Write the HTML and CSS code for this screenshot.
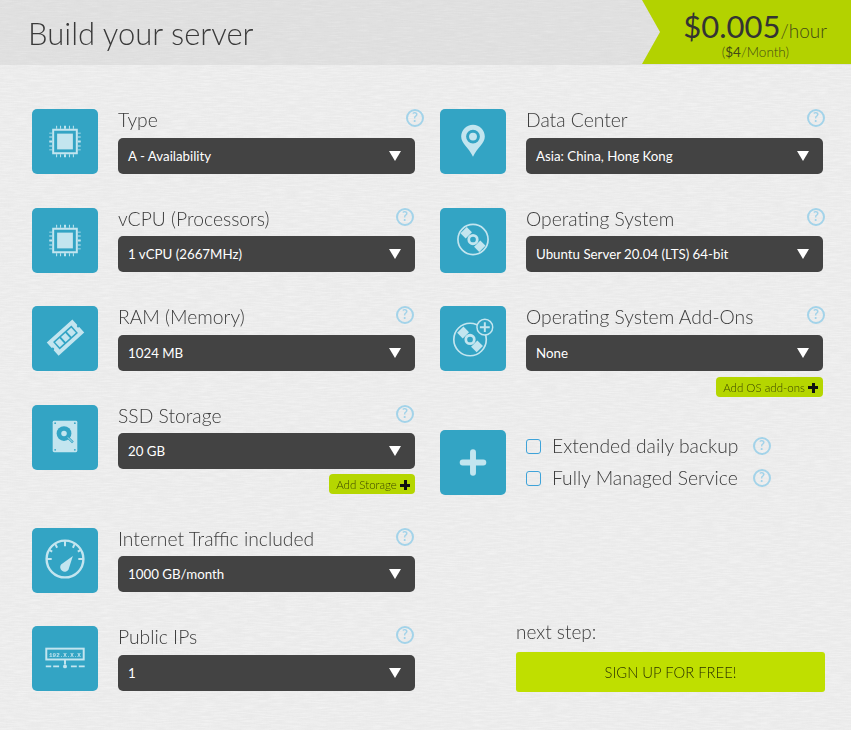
FILE: index.html
```html
<!DOCTYPE html>
<html lang="en">
<head>
<meta charset="utf-8">
<title>Build your server</title>
<link rel="stylesheet" href="styles.css">
</head>
<body>
<svg class="linen" aria-hidden="true">
  <defs>
    <filter id="weave-h" x="0" y="0" width="100%" height="100%">
      <feTurbulence type="fractalNoise" baseFrequency="0.07 0.8" numOctaves="2" seed="3"/>
      <feColorMatrix values="0 0 0 0 1  0 0 0 0 1  0 0 0 0 1  0.700 0 0 0 -0.250"/>
    </filter>
    <filter id="weave-v" x="0" y="0" width="100%" height="100%">
      <feTurbulence type="fractalNoise" baseFrequency="0.8 0.07" numOctaves="2" seed="8"/>
      <feColorMatrix values="0 0 0 0 0.800  0 0 0 0 0.800  0 0 0 0 0.800  0.700 0 0 0 -0.250"/>
    </filter>
  </defs>
  <rect width="100%" height="100%" filter="url(#weave-v)"/>
  <rect width="100%" height="100%" filter="url(#weave-h)"/>
</svg>
<svg class="defs" width="0" height="0" aria-hidden="true">
  <defs>
    <symbol id="i-chip" viewBox="0 0 66 66">
      <g fill="#c3e5ef">
        <path fill-rule="evenodd" d="M20 20h26v26H20zM22 22v22h22V22z"/>
        <rect x="25" y="25" width="16" height="16"/>
        <path d="M24 17h1v3h-1zM28 17h1v3h-1zM32 17h2v3h-2zM37 17h1v3h-1zM41 17h1v3h-1zM24 46h1v3h-1zM28 46h1v3h-1zM32 46h2v3h-2zM37 46h1v3h-1zM41 46h1v3h-1zM17 24h3v1h-3zM17 28h3v1h-3zM17 32h3v2h-3zM17 37h3v1h-3zM17 41h3v1h-3zM46 24h3v1h-3zM46 28h3v1h-3zM46 32h3v2h-3zM46 37h3v1h-3zM46 41h3v1h-3z"/>
      </g>
    </symbol>
    <symbol id="i-ram" viewBox="0 0 66 66">
      <g transform="rotate(-42 33.500 32)">
        <path fill="#c3e5ef" d="M16 23h35v7.500a1.500 1.500 0 0 0 0 3V41H16v-7.500a1.500 1.500 0 0 0 0-3z"/>
        <rect x="21" y="27" width="25" height="10" fill="#33a4c4"/>
        <path fill="#c3e5ef" d="M22.500 28.500h6v7h-6zM30.500 28.500h6v7h-6zM38.500 28.500h6v7h-6z"/>
      </g>
    </symbol>
    <symbol id="i-disk" viewBox="0 0 66 66">
      <rect x="20.500" y="16" width="25" height="32" rx="1.500" fill="#c3e5ef"/>
      <circle cx="32" cy="29" r="7.500" fill="#33a4c4"/>
      <path stroke="#33a4c4" stroke-width="2.500" d="M32 29l9 9"/>
      <circle cx="32" cy="29" r="2.800" fill="#c3e5ef"/>
      <path stroke="#c3e5ef" stroke-width="1" d="M36 33l4.500 4.500"/>
      <g fill="#33a4c4"><circle cx="23" cy="18.500" r=".9"/><circle cx="43" cy="18.500" r=".9"/><circle cx="23" cy="45.500" r=".9"/><circle cx="43" cy="45.500" r=".9"/></g>
    </symbol>
    <symbol id="i-gauge" viewBox="0 0 66 66">
      <g fill="none" stroke="#c3e5ef">
        <circle cx="33" cy="31.500" r="18.700" stroke-width="2.400"/>
        <path stroke-width="2" d="M33 13v5.500M23 16l2 4M43 16l-2 4M16.500 22l3.500 2M49.500 22l-3.500 2M14.500 31.500h5M46.500 31.500h5"/>
      </g>
      <path fill="#c3e5ef" d="M41 28.500L36.500 42.500a4.500 4.500 0 1 1-7.500-5.500z"/>
    </symbol>
    <symbol id="i-ip" viewBox="0 0 66 66">
      <rect x="14" y="23" width="38" height="11" fill="none" stroke="#c3e5ef" stroke-width="2"/>
      <text x="33" y="31" class="ip-text">192.X.X.X</text>
      <path fill="#c3e5ef" d="M32 34h2v5h-2zM13.500 40h5.500v2h-5.500zM21 40h6v2h-6zM39 40h6v2h-6zM47 40h6v2h-6z"/>
      <circle cx="33" cy="41" r="2" fill="#c3e5ef"/>
    </symbol>
    <symbol id="i-pin" viewBox="0 0 66 66">
      <path fill="#c3e5ef" fill-rule="evenodd" d="M33 16c6.600 0 12 5.300 12 12 0 7-7.500 11-12 20.500C28.500 39 21 35 21 28c0-6.700 5.400-12 12-12zM33 21a7 7 0 1 0 0 14 7 7 0 0 0 0-14z"/>
      <circle cx="33" cy="28" r="4" fill="#c3e5ef"/>
    </symbol>
    <symbol id="i-cd" viewBox="0 0 66 66">
      <circle cx="33" cy="32" r="15.300" fill="none" stroke="#c3e5ef" stroke-width="1.700"/>
      <circle cx="33" cy="32" r="4.300" fill="none" stroke="#c3e5ef" stroke-width="2.800"/>
      <g transform="rotate(-45 33 32)" fill="#c3e5ef">
        <rect x="28.500" y="18.500" width="9" height="7.500"/>
        <rect x="28.500" y="38" width="9" height="7.500"/>
      </g>
    </symbol>
    <symbol id="i-cdplus" viewBox="0 0 66 66">
      <circle cx="30" cy="34" r="16.500" fill="none" stroke="#c3e5ef" stroke-width="1.700"/>
      <circle cx="30" cy="34" r="4.300" fill="none" stroke="#c3e5ef" stroke-width="2.800"/>
      <g transform="rotate(-45 30 34)" fill="#c3e5ef">
        <rect x="25.500" y="20" width="9" height="8"/>
        <rect x="25.500" y="40" width="9" height="8"/>
      </g>
      <circle cx="45" cy="21.500" r="8" fill="#33a4c4" stroke="#c3e5ef" stroke-width="1.500"/>
      <path fill="#c3e5ef" d="M44 16.500h2v4h4v2h-4v4h-2v-4h-4v-2h4z"/>
    </symbol>
    <symbol id="i-plus" viewBox="0 0 66 66">
      <path stroke="#c3e5ef" stroke-width="6" stroke-linecap="round" d="M33 22.500v21M22.500 33h21"/>
    </symbol>
    <symbol id="i-help" viewBox="0 0 18 18">
      <circle cx="9" cy="9" r="8" fill="none" stroke="#a3d3e9" stroke-width="2"/>
      <text x="9" y="13.300" class="help-text">?</text>
    </symbol>
  </defs>
</svg>

<header class="topbar">
  <h1 class="title">Build your server</h1>
  <div class="price">
    <div class="price-main"><span class="price-value">$0.005</span>/hour</div>
    <div class="price-sub">(<b>$4</b>/Month)</div>
  </div>
</header>

<main class="builder">
  <section class="column">
    <div class="field">
      <div class="tile"><svg><use href="#i-chip"/></svg></div>
      <div class="control">
        <div class="label-row label-row-wide"><span class="label">Type</span><svg class="help"><use href="#i-help"/></svg></div>
        <div class="select">A - Availability</div>
      </div>
    </div>
    <div class="field">
      <div class="tile"><svg><use href="#i-chip"/></svg></div>
      <div class="control">
        <div class="label-row"><span class="label">vCPU (Processors)</span><svg class="help"><use href="#i-help"/></svg></div>
        <div class="select">1 vCPU (2667MHz)</div>
      </div>
    </div>
    <div class="field">
      <div class="tile"><svg><use href="#i-ram"/></svg></div>
      <div class="control">
        <div class="label-row"><span class="label">RAM (Memory)</span><svg class="help"><use href="#i-help"/></svg></div>
        <div class="select">1024 MB</div>
      </div>
    </div>
    <div class="field">
      <div class="tile"><svg><use href="#i-disk"/></svg></div>
      <div class="control">
        <div class="label-row"><span class="label">SSD Storage</span><svg class="help"><use href="#i-help"/></svg></div>
        <div class="select">20 GB</div>
        <a class="add">Add Storage <span class="add-plus"></span></a>
      </div>
    </div>
    <div class="field">
      <div class="tile"><svg><use href="#i-gauge"/></svg></div>
      <div class="control">
        <div class="label-row"><span class="label">Internet Traffic included</span><svg class="help"><use href="#i-help"/></svg></div>
        <div class="select">1000 GB/month</div>
      </div>
    </div>
    <div class="field">
      <div class="tile"><svg><use href="#i-ip"/></svg></div>
      <div class="control">
        <div class="label-row"><span class="label">Public IPs</span><svg class="help"><use href="#i-help"/></svg></div>
        <div class="select">1</div>
      </div>
    </div>
  </section>

  <section class="column">
    <div class="field">
      <div class="tile"><svg><use href="#i-pin"/></svg></div>
      <div class="control">
        <div class="label-row label-row-right"><span class="label">Data Center</span><svg class="help"><use href="#i-help"/></svg></div>
        <div class="select">Asia: China, Hong Kong</div>
      </div>
    </div>
    <div class="field">
      <div class="tile"><svg><use href="#i-cd"/></svg></div>
      <div class="control">
        <div class="label-row label-row-right"><span class="label">Operating System</span><svg class="help"><use href="#i-help"/></svg></div>
        <div class="select">Ubuntu Server 20.04 (LTS) 64-bit</div>
      </div>
    </div>
    <div class="field">
      <div class="tile"><svg><use href="#i-cdplus"/></svg></div>
      <div class="control">
        <div class="label-row label-row-right"><span class="label">Operating System Add-Ons</span><svg class="help"><use href="#i-help"/></svg></div>
        <div class="select">None</div>
        <a class="add add-low">Add OS add-ons <span class="add-plus"></span></a>
      </div>
    </div>
    <div class="field">
      <div class="tile"><svg><use href="#i-plus"/></svg></div>
      <div class="options">
        <label class="option"><span class="check"></span><span class="option-text">Extended daily backup</span><svg class="help"><use href="#i-help"/></svg></label>
        <label class="option"><span class="check"></span><span class="option-text">Fully Managed Service</span><svg class="help"><use href="#i-help"/></svg></label>
      </div>
    </div>
    <div class="next">
      <div class="next-label">next step:</div>
      <a class="signup">SIGN UP FOR FREE!</a>
    </div>
  </section>
</main>
</body>
</html>
```

FILE: styles.css
```css
* { box-sizing: border-box; }

html, body { height: 100%; }

body {
  margin: 0;
  font-family: "Lato", "Liberation Sans", sans-serif;
  font-weight: 300;
  color: #3c3c3c;
  background-color: #ebebeb;
  overflow: hidden;
}

.linen {
  position: fixed;
  inset: 0;
  width: 100%;
  height: 100%;
  z-index: -1;
}

.defs { position: absolute; }

.topbar {
  height: 65px;
  display: flex;
  justify-content: space-between;
  background-color: rgba(0,0,0,.05);
}

.title {
  margin: 0;
  padding: 13px 0 0 28px;
  font-size: 31px;
  line-height: 40px;
  font-weight: 300;
  color: #3a3a3a;
}

.price {
  width: 209px;
  height: 64px;
  padding: 11px 24px 0 0;
  text-align: right;
  background: #b3d200;
  clip-path: polygon(0 0, 100% 0, 100% 100%, 0 100%, 18px 50%);
  color: #434a15;
}

.price-main { font-size: 19px; line-height: 30px; white-space: nowrap; }
.price-value { font-size: 31px; font-weight: 400; color: #333; }
.price-sub { padding-right: 38px; font-size: 13.500px; line-height: 12px; white-space: nowrap; }
.price-sub b { font-weight: 400; }

.builder {
  display: flex;
  gap: 25px;
  padding: 44px 0 0 32px;
}

.column {
  width: 383px;
  display: flex;
  flex-direction: column;
  gap: 33.500px;
}

.field { display: flex; gap: 20px; }

.tile {
  flex: none;
  width: 66px;
  height: 65px;
  border-radius: 5px;
  background: #33a4c4;
}

.tile svg { display: block; width: 66px; height: 65px; }

.control { width: 297px; }

.label-row {
  height: 28.500px;
  display: flex;
  justify-content: space-between;
  padding-right: 1px;
}

.label-row-wide { margin-right: -10px; }
.label-row-right { margin-right: -3px; }

.label { font-size: 19.300px; line-height: 21px; white-space: nowrap; }

.help { width: 18px; height: 18px; flex: none; }

.help-text { font: 700 13px "Lato", sans-serif; fill: #a3d3e9; text-anchor: middle; }
.ip-text { font: 700 6px "Liberation Mono", monospace; fill: #c3e5ef; text-anchor: middle; }

.select {
  position: relative;
  height: 36px;
  padding-left: 10px;
  border-radius: 5px;
  background: #434343;
  color: #fff;
  font-size: 13.300px;
  font-weight: 400;
  line-height: 36px;
}

.select::after {
  content: "";
  position: absolute;
  right: 14px;
  top: 13px;
  border-style: solid;
  border-width: 10px 6px 0;
  border-color: #fff transparent transparent;
}

.add {
  display: block;
  width: max-content;
  height: 20px;
  margin: 5px 0 0 auto;
  padding: 0 5px 0 7px;
  border-radius: 4px;
  background: #b5d600;
  color: #3a4200;
  font-size: 11.500px;
  font-weight: 300;
  line-height: 21px;
}

.add-low { margin-top: 6px; }

.add-plus {
  display: inline-block;
  width: 10px;
  height: 10px;
  vertical-align: -1px;
  background:
    linear-gradient(#111, #111) center / 10px 3px no-repeat,
    linear-gradient(#111, #111) center / 3px 10px no-repeat;
}

.options {
  display: flex;
  flex-direction: column;
  gap: 8px;
  padding-top: 4px;
}

.option { display: flex; align-items: center; height: 24px; }

.check {
  flex: none;
  width: 15px;
  height: 15px;
  margin-right: 11px;
  border: 1px solid #3fa3d9;
  border-radius: 3px;
}

.option-text { font-size: 19.300px; line-height: 24px; white-space: nowrap; margin-right: 15px; }

.next { padding: 0 0 0 76px; margin-top: 91px; margin-right: -2px; }
.next-label { font-size: 19px; line-height: 24px; margin-bottom: 8px; }

.signup {
  display: block;
  height: 40px;
  border-radius: 3px;
  background: #bfdf00;
  color: #2c3300;
  font-size: 14.800px;
  font-weight: 300;
  line-height: 40px;
  text-align: center;
}
```
